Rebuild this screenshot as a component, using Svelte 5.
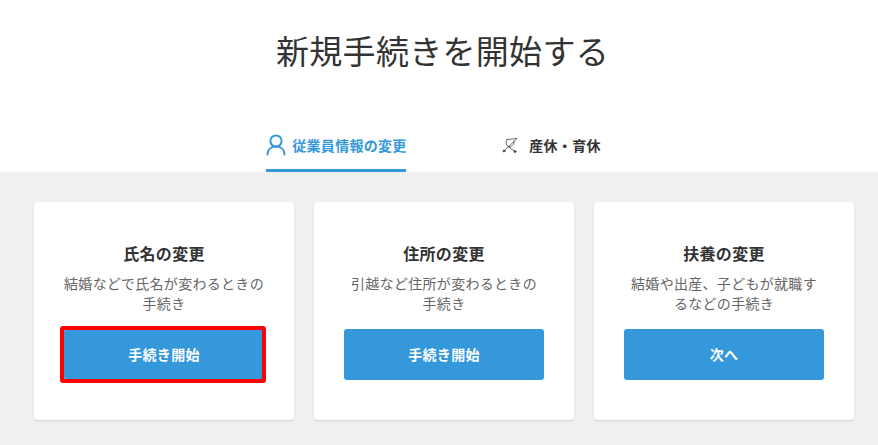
<script lang="ts">
  const cards = [
    { title: '氏名の変更', desc: '結婚などで氏名が変わるときの\n手続き', action: '手続き開始', marked: true },
    { title: '住所の変更', desc: '引越など住所が変わるときの\n手続き', action: '手続き開始', marked: false },
    { title: '扶養の変更', desc: '結婚や出産、子どもが就職す\nるなどの手続き', action: '次へ', marked: false }
  ];
</script>

<div class="page">
  <header class="top">
    <h1>新規手続きを開始する</h1>
    <nav class="tabs">
      <button class="tab active">
        <svg width="20" height="22" viewBox="0 0 20 22" fill="none" stroke="currentColor" stroke-width="2" stroke-linecap="round">
          <circle cx="10" cy="7" r="5.600" />
          <path d="M1.500 20.500c0-5 3.600-8 8.500-8s8.500 3 8.500 8" />
        </svg>
        <span>従業員情報の変更</span>
      </button>
      <button class="tab plain">
        <svg width="16" height="16" viewBox="0 0 16 16" fill="none" stroke="#444" stroke-width="0.8" stroke-linecap="round">
          <path d="M5 2.500L15 1.500L2 14" />
          <path d="M5 2.500C3.500 5 4 8 6 9.500C9 10.500 12.500 8 12 4" />
          <path d="M6 9.500L13 14.500" />
          <circle cx="2" cy="14" r="1" fill="#444" />
          <circle cx="13" cy="14.500" r="1" fill="#444" />
        </svg>
        <span>産休・育休</span>
      </button>
    </nav>
  </header>

  <main class="cards">
    {#each cards as card}
      <section class="card">
        <h2>{card.title}</h2>
        <p>{card.desc}</p>
        <div class="action">
          <button class="start">{card.action}</button>
          {#if card.marked}
            <span class="marker"></span>
          {/if}
        </div>
      </section>
    {/each}
  </main>
</div>

<style>
  :global(body) {
    margin: 0;
    background: #f0f0f0;
  }

  .page {
    width: 878px;
    height: 445px;
    overflow: hidden;
    font-family: "Noto Sans CJK JP", "Noto Sans", sans-serif;
    letter-spacing: 0.3px;
    color: #333;
  }

  .top {
    background: #fff;
    height: 172px;
    display: flex;
    flex-direction: column;
    align-items: center;
  }

  h1 {
    margin: 0;
    padding: 26px 0 0 7px;
    font-size: 33px;
    line-height: 48px;
    font-weight: 400;
  }

  .tabs {
    margin-top: 50px;
    display: flex;
    gap: 96px;
  }

  .tab {
    border: 0;
    background: none;
    padding: 0;
    height: 48px;
    display: flex;
    align-items: center;
    font: inherit;
    font-size: 14px;
    font-weight: 700;
    letter-spacing: inherit;
    color: #333;
    white-space: nowrap;
    cursor: pointer;
    box-sizing: border-box;
  }

  .tab svg {
    flex: none;
  }

  .active {
    width: 140px;
    gap: 6px;
    padding-bottom: 4px;
    color: #3498db;
    border-bottom: 3px solid #3498db;
  }

  .plain {
    gap: 11px;
    padding-right: 11px;
    padding-bottom: 7px;
  }

  .cards {
    display: flex;
    justify-content: center;
    gap: 20px;
    padding: 30px 0 0 10px;
  }

  .card {
    width: 260px;
    height: 218px;
    box-sizing: border-box;
    padding: 39px 30px 0;
    background: #fff;
    border-radius: 4px;
    box-shadow: 0 1px 2px rgba(0, 0, 0, 0.12);
    text-align: center;
  }

  h2 {
    margin: 0;
    font-size: 16px;
    line-height: 24px;
    font-weight: 700;
  }

  p {
    margin: 8px 0 0;
    font-size: 14px;
    line-height: 20px;
    height: 40px;
    color: #666;
    white-space: pre-line;
  }

  .action {
    position: relative;
    margin-top: 16px;
  }

  .start {
    display: block;
    width: 200px;
    height: 51px;
    padding: 0 0 2px;
    border: 0;
    border-radius: 3px;
    background: #3498db;
    color: #fff;
    font: inherit;
    font-size: 14px;
    font-weight: 700;
    letter-spacing: inherit;
    cursor: pointer;
  }

  .marker {
    position: absolute;
    left: -4px;
    top: -3px;
    width: 206px;
    height: 57px;
    box-sizing: border-box;
    border: 4px solid #f00;
    border-radius: 3px;
    pointer-events: none;
  }
</style>
